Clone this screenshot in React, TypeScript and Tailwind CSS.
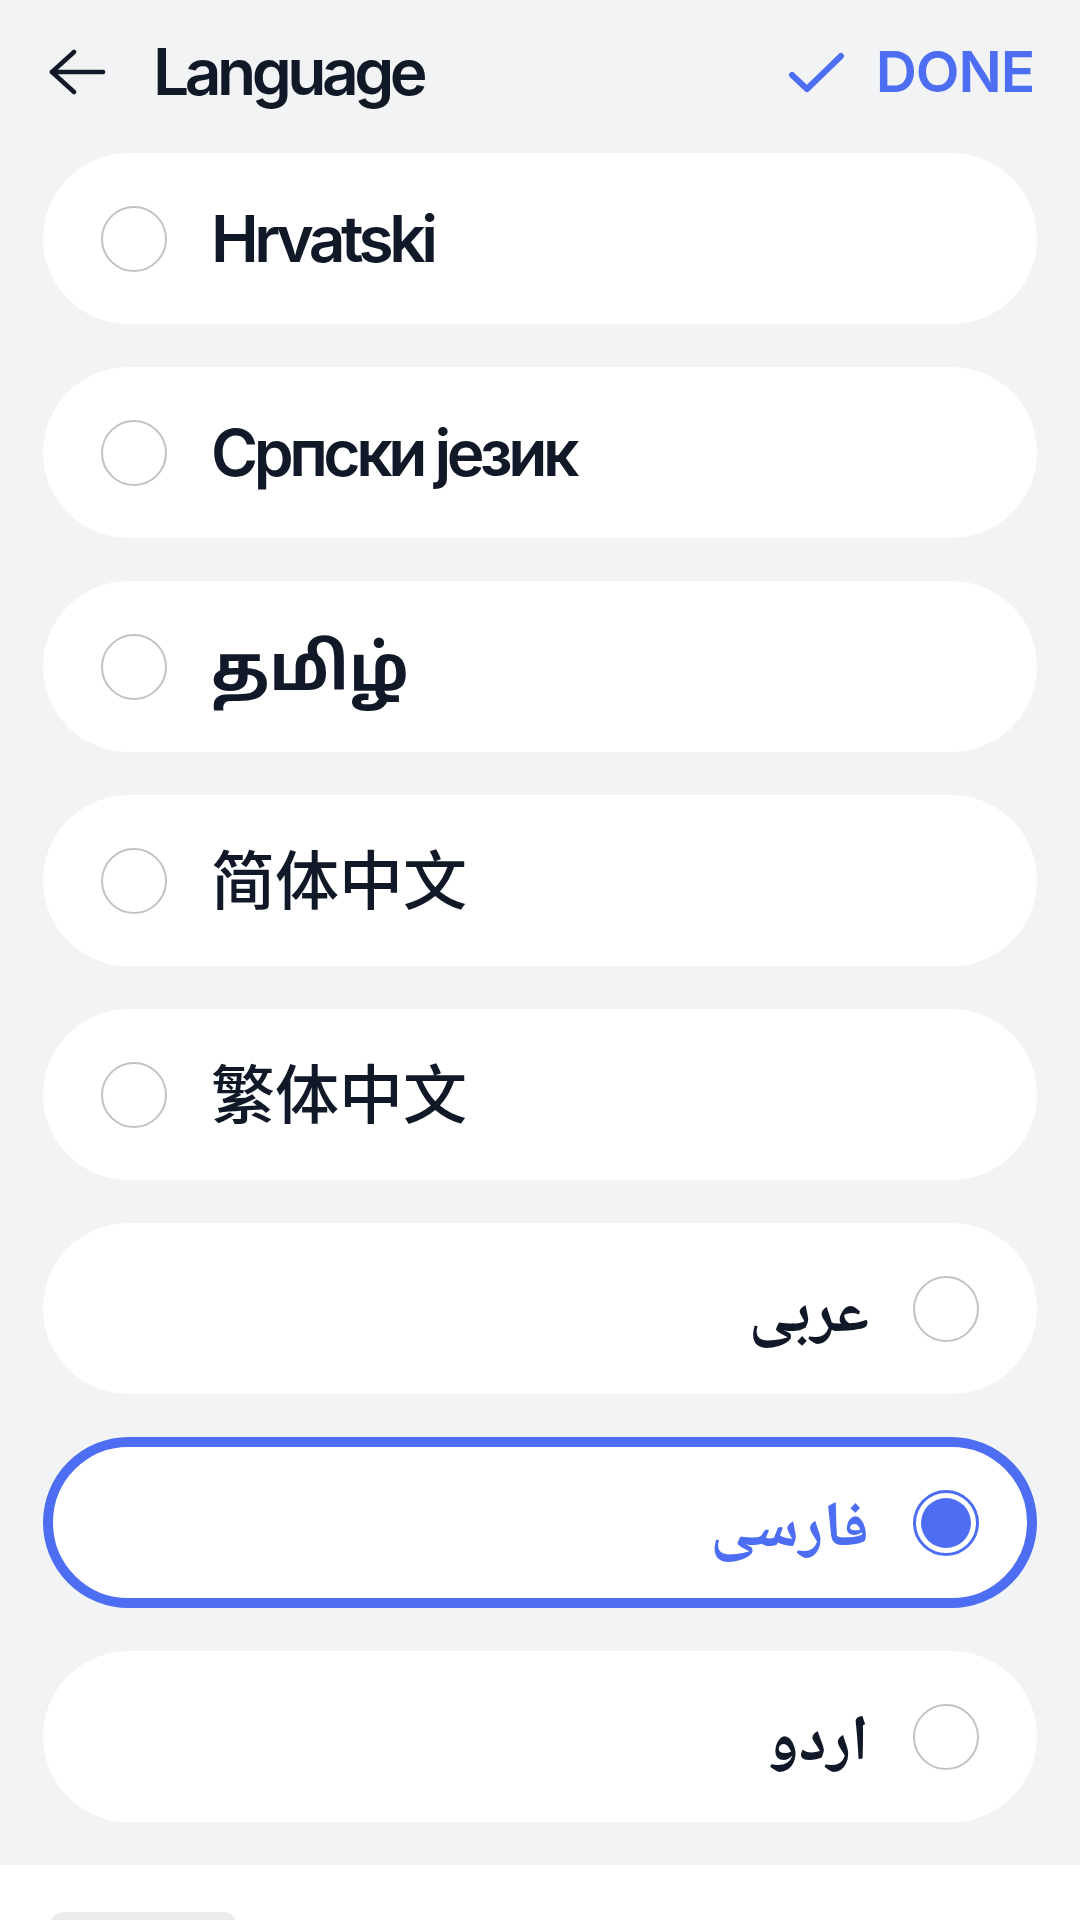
import React, { useState } from 'react';

type Lang = {
  code: string;
  label: string;
  rtl?: boolean;
  script?: 'tamil' | 'cjk';
};

const LANGUAGES: Lang[] = [
  { code: 'hr', label: 'Hrvatski' },
  { code: 'sr', label: 'Српски језик' },
  { code: 'ta', label: 'தமிழ்', script: 'tamil' },
  { code: 'zh-CN', label: '简体中文', script: 'cjk' },
  { code: 'zh-TW', label: '繁体中文', script: 'cjk' },
  { code: 'ar', label: 'عربی', rtl: true },
  { code: 'fa', label: 'فارسی', rtl: true },
  { code: 'ur', label: 'اردو', rtl: true },
];

const BackArrow = () => (
  <svg width="58" height="46" viewBox="0 0 58 46" fill="none" stroke="currentColor" strokeWidth="4.5" strokeLinecap="round" strokeLinejoin="round">
    <path d="M26 3 L4 23 L26 43" />
    <path d="M4 23 H55" />
  </svg>
);

const Check = () => (
  <svg width="58" height="42" viewBox="0 0 58 42" fill="none" stroke="currentColor" strokeWidth="6" strokeLinecap="round" strokeLinejoin="round">
    <path d="M4 24 L19 38 L53 5" />
  </svg>
);

const Radio = ({ checked }: { checked: boolean }) =>
  checked ? (
    <span className="flex h-[66px] w-[66px] shrink-0 items-center justify-center rounded-full border-[3px] border-[#4d6ef2]">
      <span className="h-[50px] w-[50px] rounded-full bg-[#4d6ef2]" />
    </span>
  ) : (
    <span className="h-[66px] w-[66px] shrink-0 rounded-full border-2 border-[#c2c2c2]" />
  );

function labelClass(lang: Lang) {
  if (lang.rtl) return 'text-[64px] font-bold';
  if (lang.script === 'tamil') return 'text-[64px] font-bold';
  if (lang.script === 'cjk') return 'text-[64px] font-medium';
  return 'text-[64px] font-semibold tracking-[-0.07em]';
}

export default function App() {
  const [selected, setSelected] = useState('fa');

  return (
    <div
      className="flex h-[1920px] flex-col overflow-hidden bg-white text-[#111827]"
      style={{ fontFamily: "Inter, 'Noto Sans', 'Noto Sans Tamil', 'Noto Naskh Arabic', 'DejaVu Sans', 'Noto Sans CJK SC', sans-serif" }}
    >
      <div className="flex-1 bg-[#f2f3f5] pb-[43px]">
        {/* top bar */}
        <header className="flex h-[144px] items-center pl-[48px] pr-[46px]">
          <button className="text-[#111827]">
            <BackArrow />
          </button>
          <h1 className="ml-[47px] text-[64px] font-semibold tracking-[-0.07em]">Language</h1>
          <button className="ml-auto flex items-center gap-[30px] text-[#4d6ef2]">
            <Check />
            <span className="text-[57px] font-semibold tracking-[-0.02em]">DONE</span>
          </button>
        </header>

        <ul className="mt-[9px] flex flex-col gap-[43px] px-[43px]">
          {LANGUAGES.map((lang) => {
            const on = lang.code === selected;
            return (
              <li key={lang.code}>
                <button
                  dir={lang.rtl ? 'rtl' : 'ltr'}
                  onClick={() => setSelected(lang.code)}
                  className={
                    'flex h-[171px] w-full items-center gap-[44px] rounded-full border-[10px] bg-white px-[48px] ' +
                    (on ? 'border-[#4d6ef2] text-[#4d6ef2]' : 'border-white text-[#111827]')
                  }
                >
                  <Radio checked={on} />
                  <span className={labelClass(lang)}>{lang.label}</span>
                </button>
              </li>
            );
          })}
        </ul>
      </div>

      {/* bottom sheet edge */}
      <div className="h-[55px] shrink-0 bg-white pl-[50px] pt-[47px]">
        <div className="h-[20px] w-[187px] rounded-t-[14px] bg-[#ebebeb]" />
      </div>
    </div>
  );
}
